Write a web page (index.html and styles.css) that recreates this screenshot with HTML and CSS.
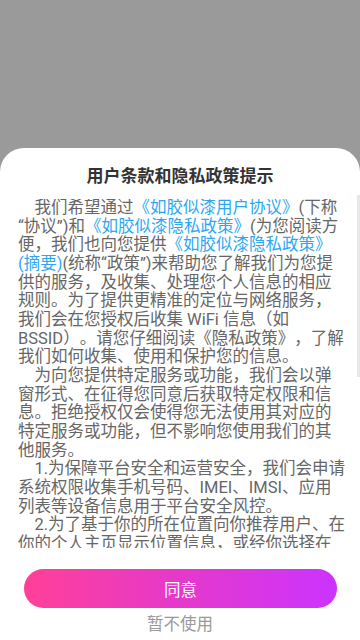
FILE: index.html
```html
<!DOCTYPE html>
<html lang="zh-CN">
<head>
<meta charset="utf-8">
<meta name="viewport" content="width=360, initial-scale=1">
<title>用户条款和隐私政策提示</title>
<link rel="stylesheet" href="styles.css">
</head>
<body>
<div class="screen">
  <div class="sheet">
    <h1 class="title">用户条款和隐私政策提示</h1>
    <div class="content">
      <p class="para">我们希望通过<a class="link">《如胶似漆用户协议》</a>(下称“协议”)和<a class="link">《如胶似漆隐私政策》</a>(为您阅读方便，我们也向您提供<a class="link">《如胶似漆隐私政策》(摘要)</a>(统称“政策”)来帮助您了解我们为您提供的服务，及收集、处理您个人信息的相应规则。为了提供更精准的定位与网络服务，我们会在您授权后收集 WiFi 信息（如BSSID）。请您仔细阅读《隐私政策》，了解我们如何收集、使用和保护您的信息。</p>
      <p class="para">为向您提供特定服务或功能，我们会以弹窗形式、在征得您同意后获取特定权限和信息。拒绝授权仅会使得您无法使用其对应的特定服务或功能，但不影响您使用我们的其他服务。</p>
      <p class="para">1.为保障平台安全和运营安全，我们会申请系统权限收集手机号码、IMEI、IMSI、应用列表等设备信息用于平台安全风控。</p>
      <p class="para">2.为了基于你的所在位置向你推荐用户、在你的个人主页显示位置信息，或经你选择在动态中展示位置，我们会申请位置权限。</p>
    </div>
    <div class="scrollbar"></div>
    <div class="actions">
      <button class="agree">同意</button>
      <div class="decline">暂不使用</div>
    </div>
  </div>
</div>
</body>
</html>
```

FILE: styles.css
```css
* { box-sizing: border-box; }
html, body {
  margin: 0;
  padding: 0;
}
body {
  background: #9a9a9a;
  font-family: Roboto, "Noto Sans CJK SC", sans-serif;
  width: 360px;
  height: 640px;
  overflow: hidden;
}
.screen {
  height: 640px;
  display: flex;
  flex-direction: column;
  justify-content: flex-end;
}
.sheet {
  position: relative;
  height: 492px;
  background: #ffffff;
  border-radius: 24px 24px 0 0;
  display: flex;
  flex-direction: column;
}
.title {
  margin: 16px 0 0;
  height: 24px;
  line-height: 24px;
  text-align: center;
  font-size: 17px;
  font-weight: 700;
  color: #333333;
  text-spacing-trim: space-all;
}
.content {
  margin-top: 11px;
  height: 349px;
  overflow: hidden;
  padding: 0 13px 0 18px;
}
.para {
  margin: 0;
  font-size: 16.5px;
  line-height: 18.65px;
  color: #666666;
  text-indent: 1em;
  text-spacing-trim: space-all;
}
.link {
  color: #2ea7f2;
  text-decoration: none;
}
.scrollbar {
  position: absolute;
  right: 0;
  top: 47px;
  width: 3px;
  height: 182px;
  background: #e8e8e8;
}
.actions {
  display: flex;
  flex-direction: column;
  align-items: center;
  padding-top: 21px;
}
.agree {
  width: 313px;
  height: 39px;
  margin-left: 1px;
  border: none;
  border-radius: 20px;
  background: linear-gradient(90deg, #ff3f98 0%, #cb33ff 100%);
  color: #ffffff;
  font-family: Roboto, "Noto Sans CJK SC", sans-serif;
  font-size: 16.5px;
  padding: 0;
}
.decline {
  margin-top: 7px;
  line-height: 20px;
  font-size: 16.5px;
  color: #999999;
}
```
